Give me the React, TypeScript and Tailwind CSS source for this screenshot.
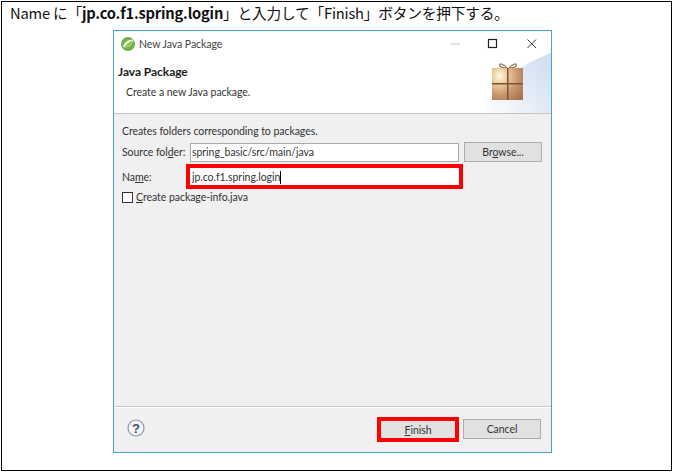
const font = "font-['Lato','Noto_Sans',sans-serif]";

const GiftIcon = () => (
  <svg width="32" height="37" viewBox="0 0 32 37" className="block">
    <defs>
      <radialGradient id="gift" cx="0.25" cy="0.25" r="0.95">
        <stop offset="0" stopColor="#fffbe6" />
        <stop offset="0.25" stopColor="#ecd0a0" />
        <stop offset="0.65" stopColor="#c4946a" />
        <stop offset="1" stopColor="#a87350" />
      </radialGradient>
    </defs>
    <path d="M15 5C11 0 6 0 8 3c1 2 4 2 7 2ZM17 5c4-5 9-5 7-2-1 2-4 2-7 2Z" fill="none" stroke="#9b6f5c" strokeWidth="1.2" />
    <rect x="0" y="5" width="31" height="32" fill="url(#gift)" />
    <rect x="15" y="5" width="1.500" height="32" fill="#7d5040" />
    <rect x="0" y="20" width="31" height="1.500" fill="#7d5040" />
  </svg>
);

const SpringLogo = () => (
  <svg width="16" height="16" viewBox="0 0 16 16" className="block">
    <circle cx="8" cy="8" r="7" fill="#6db33f" />
    <path d="M3 11C3.500 6.500 8 3.500 13 3.500 12.500 8.500 9 12.500 3 11Z" fill="#fff" />
    <path d="M4.500 11C7 8 9 6 12 4.500 12.500 8 9 11.500 4.500 11Z" fill="#8cc63f" />
  </svg>
);

const WindowButtons = () => (
  <div className="flex items-center">
    <svg width="12" height="12" viewBox="0 0 12 12" className="mr-[26px]">
      <path d="M1 6h10" stroke="#c4c4c4" />
    </svg>
    <svg width="12" height="12" viewBox="0 0 12 12" className="mr-[27px]">
      <rect x="1.500" y="1.500" width="8" height="8" fill="none" stroke="#222" strokeWidth="1.200" />
    </svg>
    <svg width="12" height="12" viewBox="0 0 12 12" className="mr-[13px]">
      <path d="M1.500 1.500l8.500 8.500M10 1.500L1.500 10" stroke="#333" strokeWidth="1" fill="none" />
    </svg>
  </div>
);

const App = () => {
  return (
    <div className="h-[472px] w-[673px] overflow-hidden bg-white pl-px pt-px">
      <div className="h-[470px] w-[671px] border border-black">
        <p className="h-[28px] whitespace-nowrap pl-[8px] pt-px text-[14.7px] leading-[20px] tracking-[-0.2px] text-[#111] font-['Noto_Sans_CJK_JP',sans-serif]">
          Name に「<b className="font-bold tracking-[-0.2px]">jp.co.f1.spring.login</b>」と入力して「Finish」ボタンを押下する。
        </p>

        <div className={`ml-[111px] flex h-[423px] w-[439px] flex-col border border-[#4aa3c4] bg-[#f0f0f0] text-[10.5px] tracking-[-0.05px] text-[#333] ${font}`}>
          <div className="relative h-[83px] overflow-hidden border-b border-[#c4c4c4] bg-white">
            <svg width="70" height="60" viewBox="0 0 70 60" className="absolute bottom-0 right-0">
              <defs>
                <linearGradient id="sky" x1="0" y1="1" x2="1" y2="0.3">
                  <stop offset="0" stopColor="#ffffff" />
                  <stop offset="1" stopColor="#d3dff2" />
                </linearGradient>
              </defs>
              <path d="M0 60C10 30 40 12 70 0V60Z" fill="url(#sky)" />
            </svg>
            <div className="relative flex h-[26px] items-center justify-between pl-[6px]">
              <div className="flex items-center gap-[3px]">
                <SpringLogo />
                <span className="pt-px text-[#444]">New Java Package</span>
              </div>
              <WindowButtons />
            </div>
            <h1 className="relative mt-[7px] pl-[4px] text-[12px] font-bold leading-[15px] text-[#1a1a1a]">Java Package</h1>
            <p className="relative mt-[6px] pl-[12px] leading-[15px]">Create a new Java package.</p>
            <div className="absolute right-[27px] top-[32px]">
              <GiftIcon />
            </div>
          </div>

          <div className="flex flex-1 flex-col border-b border-[#c8c8c8] pl-[8px] pr-[9px] pt-[10px]">
            <p className="leading-[15px]">Creates folders corresponding to packages.</p>
            <div className="mt-[3px] flex items-center">
              <label className="w-[68px] whitespace-nowrap pt-[2px]">
                Source fol<span className="underline">d</span>er:
              </label>
              <div className="flex h-[19px] w-[269px] items-center border border-[#a9a9a9] bg-white pl-px pt-[2px]">
                spring_basic/src/main/java
              </div>
              <button className="ml-[5px] h-[20px] w-[78px] border border-[#adadad] bg-[#e1e1e1] pt-[2px]">
                Br<span className="underline">o</span>wse...
              </button>
            </div>
            <div className="mt-[2px] flex items-center">
              <label className="w-[64px] pt-[2px]">
                Na<span className="underline">m</span>e:
              </label>
              <div className="flex h-[25px] w-[277px] items-center border-[4px] border-[#ff0000] bg-white pl-[2px] pt-[2px]">
                jp.co.f1.spring.login
                <span className="h-[13px] w-px bg-black" />
              </div>
            </div>
            <label className="mt-px flex items-center gap-[3px]">
              <span className="h-[11px] w-[11px] border border-[#333] bg-white" />
              <span>
                <span className="underline">C</span>reate package-info.java
              </span>
            </label>
          </div>

          <div className="flex h-[45px] shrink-0 items-center justify-between border-t border-white pb-[2px] pl-[13px] pr-[10px]">
            <svg width="18" height="18" viewBox="0 0 18 18" className="mb-[2px]">
              <circle cx="9" cy="9" r="8" fill="#f5f5f7" stroke="#8a97ad" strokeWidth="1.200" />
              <text x="9" y="13.500" textAnchor="middle" fontSize="13" fontWeight="700" fill="#3f4f75" fontFamily="Liberation Sans">?</text>
            </svg>
            <div className="flex items-center gap-[4px]">
              <button className="h-[25px] w-[82px] border-[4px] border-[#ff0000] bg-[#e1e1e1] pt-[2px]">
                <span className="underline">F</span>inish
              </button>
              <button className="h-[20px] w-[78px] border border-[#adadad] bg-[#e1e1e1] pt-[2px]">Cancel</button>
            </div>
          </div>
        </div>
      </div>
    </div>
  );
};

export default App;
